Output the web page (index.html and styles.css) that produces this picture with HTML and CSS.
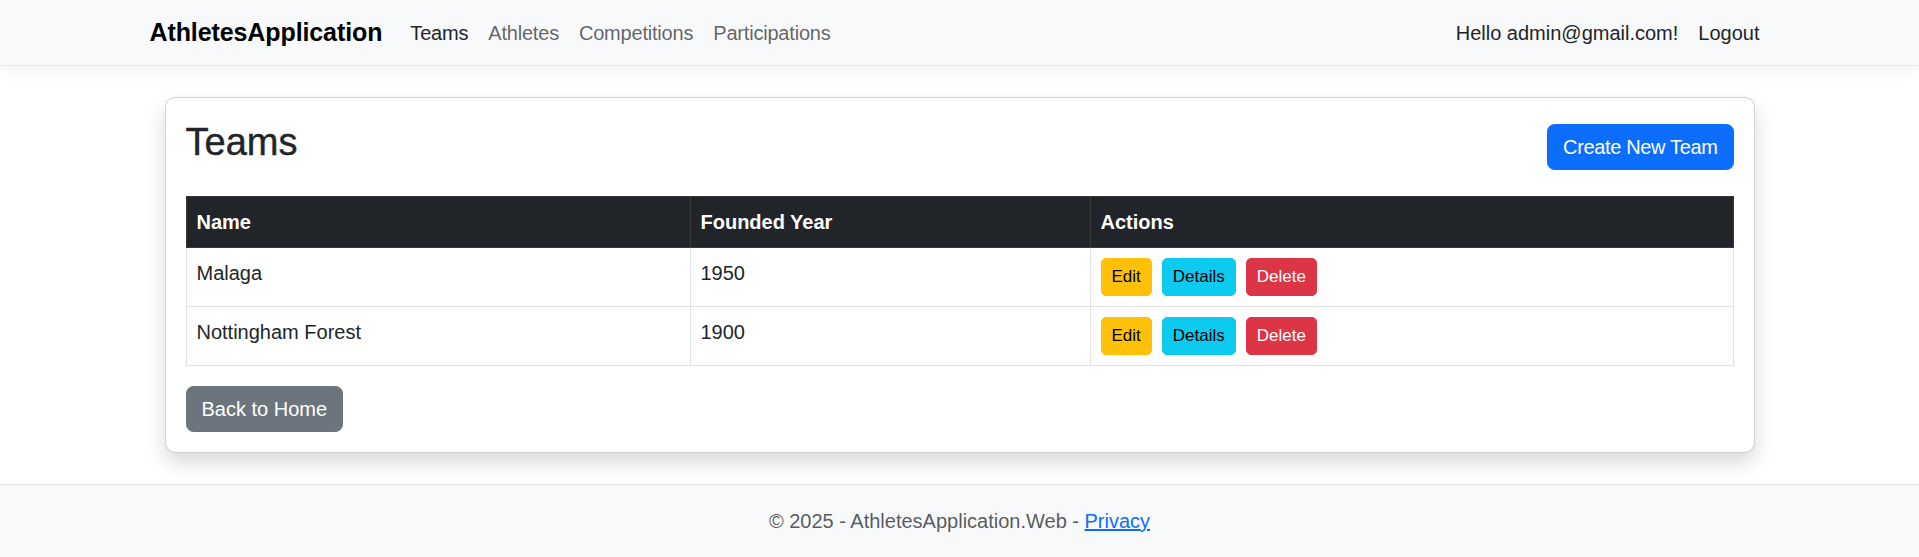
FILE: index.html
```html
<!DOCTYPE html>
<html lang="en">
<head>
<meta charset="utf-8">
<title>Teams - AthletesApplication.Web</title>
<link rel="stylesheet" href="styles.css">
</head>
<body>
<header class="site-header">
  <nav class="navbar">
    <div class="nav-container">
      <a class="brand" href="#">AthletesApplication</a>
      <ul class="nav-list">
        <li><a class="nav-link active" href="#">Teams</a></li>
        <li><a class="nav-link" href="#">Athletes</a></li>
        <li><a class="nav-link" href="#">Competitions</a></li>
        <li><a class="nav-link" href="#">Participations</a></li>
      </ul>
      <ul class="nav-list nav-right">
        <li><a class="nav-link dark" href="#">Hello admin@gmail.com!</a></li>
        <li><a class="nav-link dark" href="#">Logout</a></li>
      </ul>
    </div>
  </nav>
</header>

<div class="container">
  <main class="main">
    <div class="page">
      <div class="card">
        <div class="card-body">
          <div class="title-row">
            <h2 class="title">Teams</h2>
            <a class="btn btn-primary btn-create" href="#">Create New Team</a>
          </div>
          <table class="table">
            <colgroup>
              <col class="col-name">
              <col class="col-year">
              <col>
            </colgroup>
            <thead>
              <tr>
                <th>Name</th>
                <th>Founded Year</th>
                <th>Actions</th>
              </tr>
            </thead>
            <tbody>
              <tr>
                <td>Malaga</td>
                <td>1950</td>
                <td>
                  <div class="actions">
                    <a class="btn btn-sm btn-warning" href="#">Edit</a>
                    <a class="btn btn-sm btn-info" href="#">Details</a>
                    <a class="btn btn-sm btn-danger" href="#">Delete</a>
                  </div>
                </td>
              </tr>
              <tr>
                <td>Nottingham Forest</td>
                <td>1900</td>
                <td>
                  <div class="actions">
                    <a class="btn btn-sm btn-warning" href="#">Edit</a>
                    <a class="btn btn-sm btn-info" href="#">Details</a>
                    <a class="btn btn-sm btn-danger" href="#">Delete</a>
                  </div>
                </td>
              </tr>
            </tbody>
          </table>
          <a class="btn btn-secondary" href="#">Back to Home</a>
        </div>
      </div>
    </div>
  </main>
</div>

<footer class="footer">
  &copy; 2025 - AthletesApplication.Web - <a class="footer-link" href="#">Privacy</a>
</footer>
</body>
</html>
```

FILE: styles.css
```css
* {
  box-sizing: border-box;
}

html, body {
  margin: 0;
  padding: 0;
}

body {
  min-height: 100vh;
  display: flex;
  flex-direction: column;
  font-family: "Liberation Sans", Arial, sans-serif;
  font-size: 20px;
  line-height: 1.5;
  color: #212529;
  background: #fff;
}

a {
  text-decoration: none;
}

/* Navbar */
.navbar {
  height: 66px;
  background: #f8f9fa;
  border-bottom: 1px solid #e9ecef;
  box-shadow: 0 5px 15px rgba(0, 0, 0, 0.05);
  margin-bottom: 20px;
}

.nav-container {
  width: 1650px;
  margin: 0 auto;
  padding: 0 15px;
  height: 100%;
  display: flex;
  align-items: center;
}

.brand {
  font-size: 25px;
  font-weight: 700;
  color: #000;
  margin-right: 18px;
  line-height: 37px;
  letter-spacing: -0.1px;
}

.nav-list {
  list-style: none;
  margin: 0;
  padding: 0;
  display: flex;
  align-items: center;
}

.nav-right {
  margin-left: auto;
}

.nav-link {
  display: block;
  padding: 10px;
  line-height: 30px;
  color: rgba(0, 0, 0, 0.62);
  letter-spacing: -0.2px;
}

.nav-link.active {
  color: #212529;
}

.nav-link.dark {
  color: #212529;
  letter-spacing: 0;
}

/* Layout */
.container {
  width: 1650px;
  margin: 0 auto;
  padding: 0 15px;
}

.main {
  padding-bottom: 20px;
}

.page {
  padding: 0 15px;
  margin-top: 11px;
}

/* Card */
.card {
  background: #fff;
  border: 1px solid rgba(0, 0, 0, 0.175);
  border-radius: 10px;
  box-shadow: 0 10px 20px rgba(0, 0, 0, 0.15);
}

.card-body {
  padding: 20px;
}

.title-row {
  display: flex;
  justify-content: space-between;
  align-items: center;
  margin-bottom: 20px;
}

.title {
  margin: 0 0 10px;
  font-size: 38px;
  font-weight: 500;
  line-height: 48px;
  color: #212529;
  -webkit-text-stroke: 0.4px #212529;
}

/* Buttons */
.btn {
  display: inline-block;
  border: 1px solid transparent;
  padding: 7px 15px;
  font-size: 20px;
  line-height: 30px;
  border-radius: 7.5px;
  text-align: center;
  white-space: nowrap;
}

.btn-create {
  letter-spacing: -0.35px;
}

.btn-sm {
  padding: 5px 10px;
  font-size: 17px;
  line-height: 26px;
  border-radius: 5px;
}

.btn-primary {
  background: #0d6efd;
  border-color: #0d6efd;
  color: #fff;
}

.btn-secondary {
  background: #6c757d;
  border-color: #6c757d;
  color: #fff;
}

.btn-warning {
  background: #ffc107;
  border-color: #ffc107;
  color: #000;
}

.btn-info {
  background: #0dcaf0;
  border-color: #0dcaf0;
  color: #000;
}

.btn-danger {
  background: #dc3545;
  border-color: #dc3545;
  color: #fff;
}

/* Table */
.table {
  width: 100%;
  table-layout: fixed;
  border-collapse: collapse;
  margin-bottom: 20px;
}

.col-name {
  width: 504px;
}

.col-year {
  width: 400px;
}

.table th,
.table td {
  padding: 10px;
  text-align: left;
  vertical-align: top;
  border: 1px solid #dee2e6;
  line-height: 30px;
}

.table thead th {
  background: #212529;
  color: #fff;
  font-weight: 700;
  border-color: #373b3e;
}

.actions {
  display: flex;
  gap: 10px;
}

/* Footer */
.footer {
  margin-top: auto;
  height: 73px;
  line-height: 72px;
  border-top: 1px solid #dee2e6;
  background: #f8f9fa;
  text-align: center;
  color: rgba(33, 37, 41, 0.75);
  white-space: nowrap;
}

.footer-link {
  color: #0d6efd;
  text-decoration: underline;
}
```
